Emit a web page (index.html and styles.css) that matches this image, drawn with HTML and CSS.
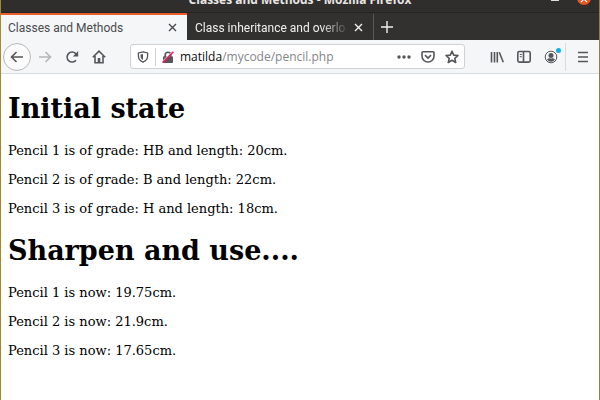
FILE: index.html
```html
<!DOCTYPE html>
<html lang="en">
<head>
    <meta charset="UTF-8">
    <meta name="viewport" content="width=device-width, initial-scale=1.0">
    <title>Classes and Methods</title>
    <link rel="stylesheet" href="styles.css">
</head>
<body>
    <div class="window">
        <div class="titlebar">
            <div class="window-title">Classes and Methods - Mozilla Firefox</div>
            <button class="minimize" aria-label="Minimize"></button>
            <button class="close-window" aria-label="Close window">
                <svg width="14" height="14" viewBox="0 0 14 14"><circle cx="7" cy="7" r="7" fill="#ea5420"/><path d="M4 5l6 6M10 5l-6 6" stroke="#fff" stroke-width="1.2"/></svg>
            </button>
        </div>

        <div class="tabs">
            <div class="tab active">
                <span class="tab-label">Classes and Methods</span>
                <button class="tab-close" aria-label="Close tab">
                    <svg width="9" height="9" viewBox="0 0 9 9"><path d="M1 1l7 7M8 1l-7 7"/></svg>
                </button>
            </div>
            <div class="tab">
                <span class="tab-label fade">Class inheritance and overlo</span>
                <button class="tab-close" aria-label="Close tab">
                    <svg width="9" height="9" viewBox="0 0 9 9"><path d="M1 1l7 7M8 1l-7 7"/></svg>
                </button>
            </div>
            <button class="new-tab" aria-label="New tab">
                <svg width="12" height="12" viewBox="0 0 12 12"><path d="M6 0v12M0 6h12"/></svg>
            </button>
        </div>

        <div class="toolbar">
            <button class="back" aria-label="Back">
                <svg width="14" height="14" viewBox="0 0 14 14"><path d="M13 7H1.5M6.5 2l-5 5 5 5"/></svg>
            </button>
            <button class="tool faded" aria-label="Forward">
                <svg width="14" height="14" viewBox="0 0 14 14"><path d="M1 7h11.5M7.5 2l5 5-5 5"/></svg>
            </button>
            <button class="tool" aria-label="Reload">
                <svg width="14" height="14" viewBox="0 0 14 14"><path d="M11 10.2A5 5 0 1 1 10.7 3.6L12 5"/><path class="solid" d="M13.2 1v5.4H7.8z"/></svg>
            </button>
            <button class="tool" aria-label="Home">
                <svg width="14" height="14" viewBox="0 0 14 14"><path d="M.8 7.2L7 1.2l6.2 6M3 6v6.7h8V6"/><path class="solid" d="M5.7 8h2.6v5H5.7z"/></svg>
            </button>

            <div class="urlbar">
                <button class="shield" aria-label="Tracking protection">
                    <svg width="12" height="12" viewBox="0 0 12 12"><path stroke-width="1.3" d="M6 .9l4.6 1v3.2c0 3-1.8 4.9-4.6 6.1-2.8-1.2-4.6-3.1-4.6-6.1V1.9z"/><path class="solid" d="M6 3v6C4.3 8 3.5 6.8 3.5 5V3.5z"/></svg>
                </button>
                <button class="lock" aria-label="Connection is not secure">
                    <svg width="12" height="12" viewBox="0 0 12 12"><path d="M3.2 6V4a2.8 2.8 0 0 1 5.6 0v2"/><path class="solid" d="M1 5.5h10V11a1 1 0 0 1-1 1H2a1 1 0 0 1-1-1z"/><path d="M.3 10.5L10 .8" stroke="#fff" stroke-width="1"/><path d="M.6 11.6L11.4.8" stroke="#f0185a"/></svg>
                </button>
                <a class="address" href="#"><b>matilda</b>/mycode/pencil.php</a>
                <button class="page-action" aria-label="Page actions">
                    <svg width="14" height="12" viewBox="0 0 14 12"><g class="solid"><circle cx="2" cy="6" r="1.7"/><circle cx="7" cy="6" r="1.7"/><circle cx="12" cy="6" r="1.7"/></g></svg>
                </button>
                <button class="page-action" aria-label="Save to Pocket">
                    <svg width="14" height="12" viewBox="0 0 14 12"><path d="M2 .8h10q1 0 1 1V5a6 6 0 0 1-12 0V1.8q0-1 1-1zM4 4.2l3 2.9 3-2.9"/></svg>
                </button>
                <button class="page-action" aria-label="Bookmark this page">
                    <svg width="14" height="14" viewBox="0 0 14 14"><path stroke-linejoin="round" d="M7 1.2l1.7 3.9 4.3.4-3.2 2.8.9 4.2L7 10.3l-3.7 2.2.9-4.2L1 5.5l4.3-.4z"/></svg>
                </button>
            </div>

            <button class="tool" aria-label="Library">
                <svg width="14" height="14" viewBox="0 0 14 14"><path d="M1.5 2v10.5M4.5 2v10.5M7.3 2v10.5M9.3 2.3l4 10"/></svg>
            </button>
            <button class="tool" aria-label="Sidebars">
                <svg width="14" height="14" viewBox="0 0 14 14"><rect x=".8" y="1.5" width="12.4" height="10.6" rx="1.5"/><path d="M6.5 2v10"/><path d="M2.8 4.5h2M2.8 6.7h2" stroke-width="1"/></svg>
            </button>
            <button class="tool account" aria-label="Account">
                <svg width="14" height="14" viewBox="0 0 14 14"><circle cx="7" cy="7" r="5.8" stroke-width="1"/><circle class="solid" cx="7" cy="5.4" r="2.5"/><path class="solid" d="M3 9.5q1-1.3 2.5-1.3 1.5.8 3 0Q10 8.2 11 9.5 9.5 11.7 7 11.7T3 9.5z"/></svg>
                <span class="badge"></span>
            </button>
            <button class="tool menu" aria-label="Open menu">
                <svg width="14" height="14" viewBox="0 0 14 14"><path d="M2 2.5h10M2 7h10M2 11.5h10"/></svg>
            </button>
        </div>

        <main class="page">
            <h1>Initial state</h1>
            <p>Pencil 1 is of grade: HB and length: 20cm.</p>
            <p>Pencil 2 is of grade: B and length: 22cm.</p>
            <p>Pencil 3 is of grade: H and length: 18cm.</p>
            <h1>Sharpen and use....</h1>
            <p>Pencil 1 is now: 19.75cm.</p>
            <p>Pencil 2 is now: 21.9cm.</p>
            <p>Pencil 3 is now: 17.65cm.</p>
        </main>
    </div>
</body>
</html>
```
FILE: styles.css
```css
* {
    box-sizing: border-box;
}
body {
    margin: 0;
    font-family: "Open Sans", "Noto Sans", sans-serif;
    font-size: 12px;
    background: #fff;
}
button {
    display: flex;
    align-items: center;
    justify-content: center;
    flex-shrink: 0;
    padding: 0;
    border: none;
    background: none;
    color: inherit;
}
svg {
    display: block;
    fill: none;
    stroke: currentColor;
    stroke-width: 1.6;
}
.solid {
    fill: currentColor;
    stroke: none;
}
.window {
    min-height: 100vh;
    border-left: 1px solid #a08a38;
    border-right: 1px solid #8c8438;
}

/* title bar, partly scrolled out at the top */
.titlebar {
    position: relative;
    display: flex;
    align-items: flex-end;
    justify-content: flex-end;
    gap: 18px;
    height: 13px;
    padding: 0 8px 7px 0;
    overflow: hidden;
    background: #302e2d;
    border-bottom: 1px solid #252323;
}
.window-title {
    position: absolute;
    left: 0;
    right: 0;
    bottom: 4px;
    line-height: 16px;
    text-align: center;
    font-weight: bold;
    color: #e8e6e3;
}
.minimize {
    width: 8px;
    height: 1px;
    margin-bottom: 4px;
    background: #e0dedb;
}
.close-window svg {
    stroke: none;
}

.tabs {
    display: flex;
    height: 27px;
    background: #333130;
    color: #f0f0f0;
    font-family: Roboto, "Open Sans", sans-serif;
}
.tab {
    display: flex;
    align-items: center;
    width: 187px;
    padding: 0 10px 0 8px;
    border-top: 2px solid transparent;
    border-right: 1px solid #5c5a59;
}
.tab.active {
    width: 186px;
    padding-left: 7px;
    background: #f5f6f7;
    color: #4a4a4f;
    border-top-color: #ea5d2c;
    border-right: none;
}
.tab-label {
    flex: 1;
    min-width: 0;
    overflow: hidden;
    white-space: nowrap;
}
.fade {
    -webkit-mask-image: linear-gradient(to left, transparent, #000 28px);
    mask-image: linear-gradient(to left, transparent, #000 28px);
}
.tab-close {
    margin-left: 5px;
}
.tab-close svg,
.new-tab svg {
    stroke-width: 1.4;
}
.new-tab {
    width: 26px;
}

.toolbar {
    display: flex;
    align-items: center;
    gap: 1px;
    height: 34px;
    padding-left: 2px;
    background: #f5f6f7;
    border-bottom: 1px solid #d8dbdf;
    color: #56565a;
}
.back {
    width: 28px;
    height: 28px;
    border: 1px solid #b9b9bb;
    border-radius: 50%;
    background: #fbfbfc;
}
.tool {
    width: 26px;
    height: 26px;
}
.faded {
    color: #b5b6b8;
}
.urlbar {
    display: flex;
    align-items: center;
    flex: 1;
    min-width: 0;
    height: 25px;
    margin: 0 18px 0 17px;
    border: 1px solid #d0d1d4;
    border-radius: 3px;
    background: #fff;
}
.shield,
.lock {
    width: 24px;
    height: 18px;
}
.lock {
    border-left: 1px solid #d0d0d3;
}
.address {
    flex: 1;
    min-width: 0;
    padding-left: 1px;
    overflow: hidden;
    white-space: nowrap;
    color: #85858a;
    text-decoration: none;
}
.address b {
    font-weight: normal;
    color: #0c0c0d;
}
.page-action {
    width: 24px;
    height: 20px;
}
.account {
    position: relative;
}
.badge {
    position: absolute;
    top: 4px;
    right: 3px;
    width: 5px;
    height: 5px;
    border-radius: 50%;
    background: #0ab0f5;
}
.menu {
    width: 34px;
    height: 28px;
    border-left: 1px solid #d9dbde;
}

.page {
    padding: 1px 7px 0;
    font-family: "DejaVu Serif", serif;
    font-size: 13px;
    line-height: 16px;
    color: #000;
}
.page h1 {
    margin: 18px 0;
    font-size: 27px;
    line-height: 32px;
}
.page p {
    margin: 13px 0;
}
```
